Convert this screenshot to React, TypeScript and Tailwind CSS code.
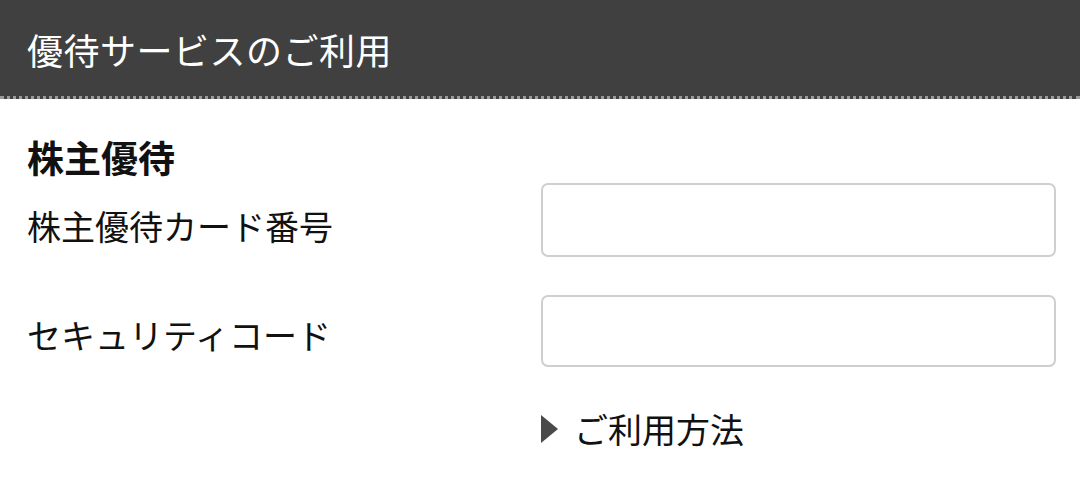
export default function App() {
  const font = { fontFamily: '"Noto Sans CJK JP", "Noto Sans", sans-serif' };

  return (
    <div className="w-[1080px] h-[477px] bg-white text-[#111] overflow-hidden" style={font}>
      {/* Header */}
      <div className="h-[99px] bg-[#404040] border-b-[3px] border-dotted border-[#9a9a9a] flex items-center pl-[27px]">
        <h1 className="text-[36px] leading-none text-white font-normal tracking-[0.5px] pt-[2px]">
          優待サービスのご利用
        </h1>
      </div>

      {/* Form */}
      <div className="pl-[27px] pr-[24px] pt-[32px]">
        <h2 className="text-[37px] leading-[52px] font-bold">株主優待</h2>

        <div className="grid grid-cols-[514px_1fr] items-center">
          <label className="text-[34px] leading-[50px] pt-[12px]">株主優待カード番号</label>
          <input
            type="text"
            className="h-[74px] w-full rounded-[7px] border-2 border-[#cfcfcf] bg-white outline-none"
          />
        </div>

        <div className="grid grid-cols-[514px_1fr] items-center mt-[38px]">
          <label className="text-[34px] leading-[50px] pt-[8px]">セキュリティコード</label>
          <input
            type="text"
            className="h-[72px] w-full rounded-[7px] border-2 border-[#cfcfcf] bg-white outline-none"
          />
        </div>

        <div className="grid grid-cols-[514px_1fr] mt-[37px]">
          <div />
          <a href="#" className="flex items-center gap-[19px] text-[34px] leading-[50px] text-[#111]">
            <svg width="17" height="28" viewBox="0 0 17 28" className="shrink-0">
              <polygon points="0,0 17,14 0,28" fill="#4a4a4a" />
            </svg>
            <span className="-ml-[3px]">ご利用方法</span>
          </a>
        </div>
      </div>
    </div>
  );
}
